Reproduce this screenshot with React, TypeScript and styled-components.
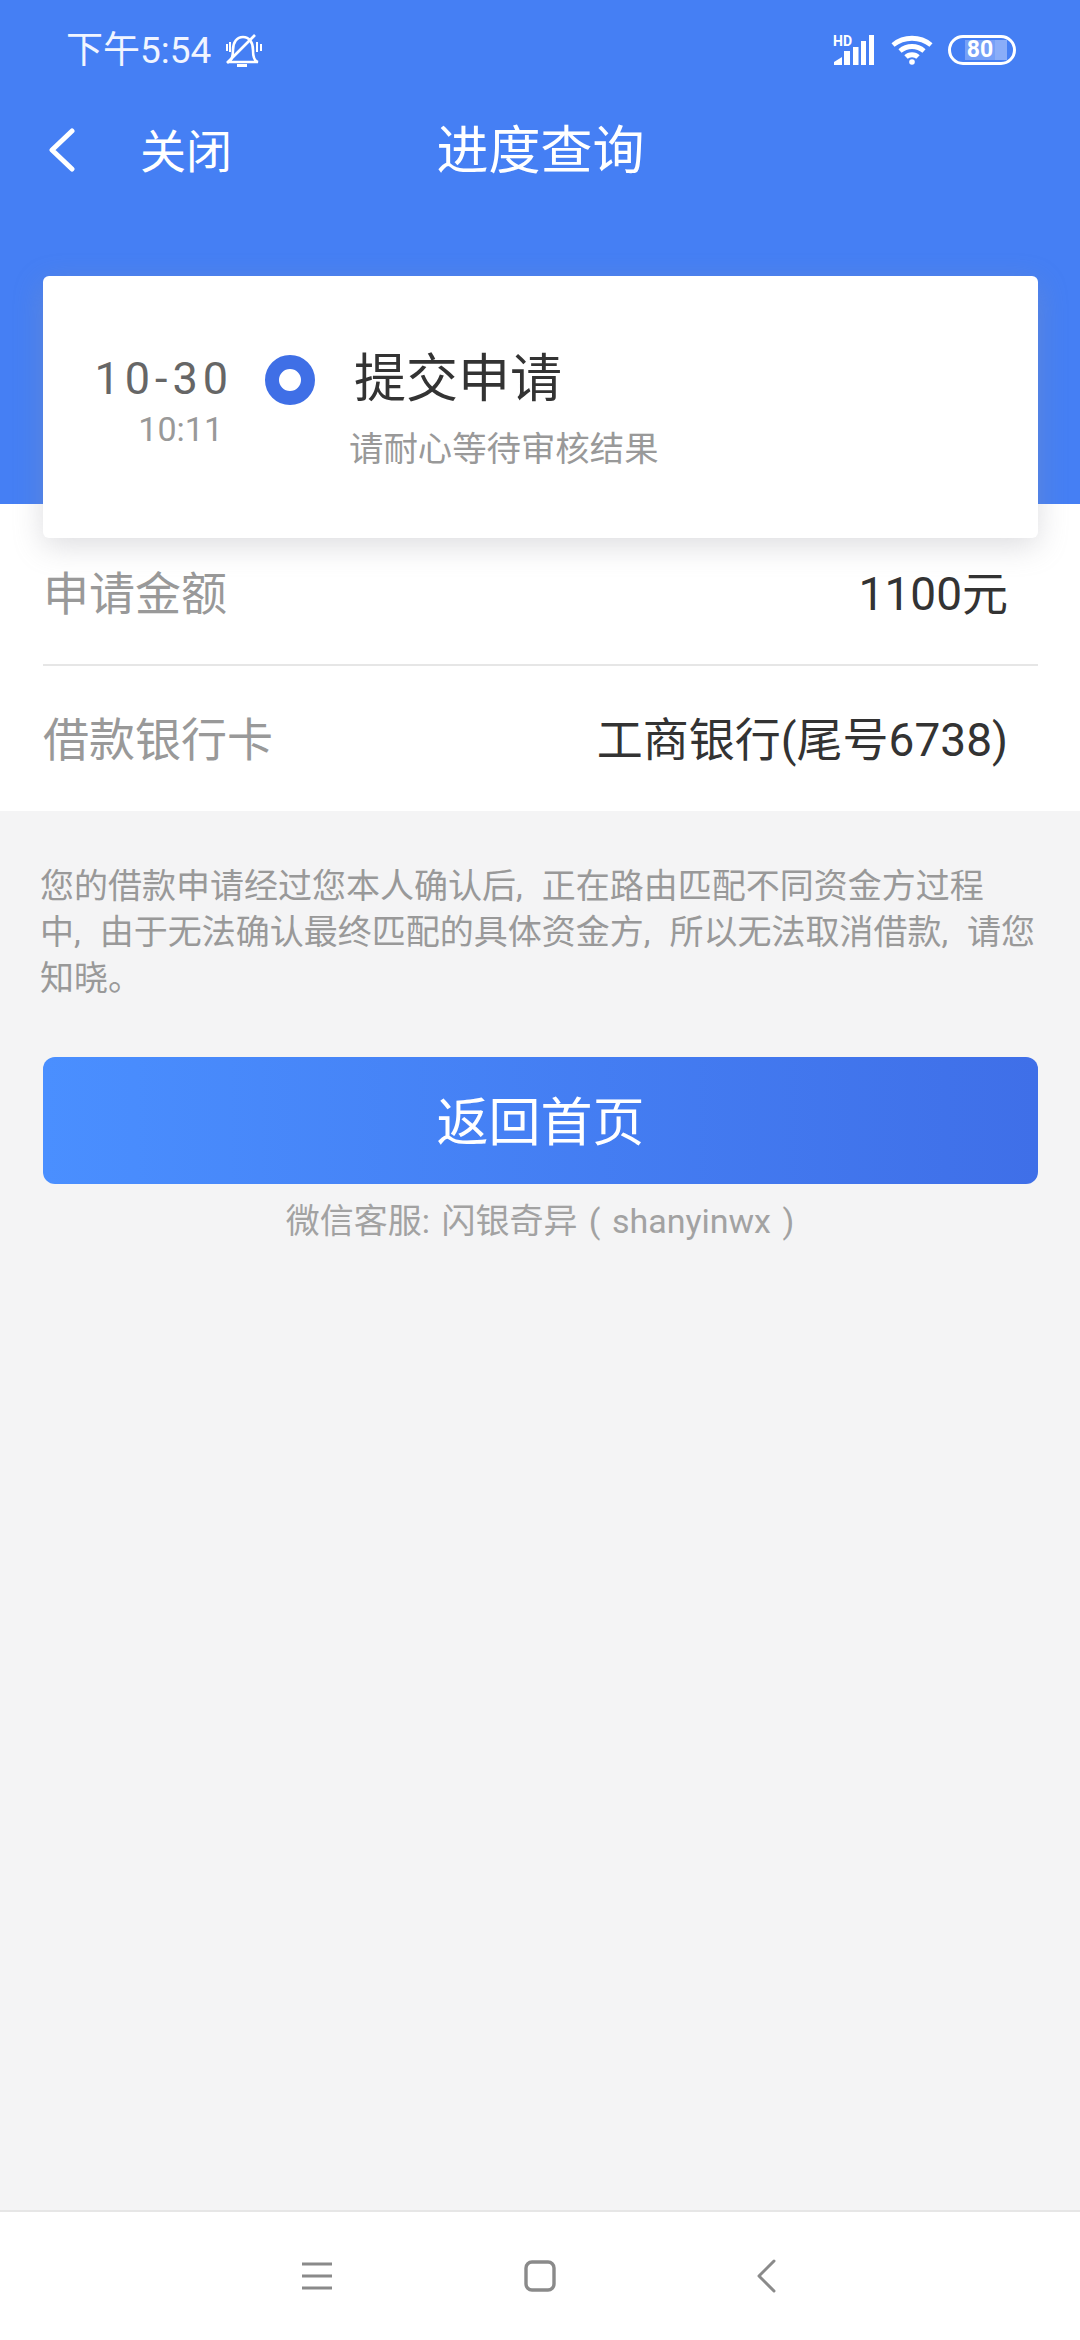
import styled, { createGlobalStyle } from "styled-components";

const GlobalStyle = createGlobalStyle`
  html, body {
    margin: 0;
    padding: 0;
    background: #f4f4f5;
    font-family: Roboto, "Noto Sans CJK SC", sans-serif;
  }
  * { box-sizing: border-box; }
`;

const Page = styled.div`
  width: 1080px;
  height: 2340px;
  display: flex;
  flex-direction: column;
  background: #f4f4f5;
  overflow: hidden;
`;

const Header = styled.header`
  height: 504px;
  background: #457ff4;
  padding: 0 42px 0 43px;
  color: #fff;
`;

const StatusBar = styled.div`
  height: 100px;
  display: flex;
  align-items: center;
  padding: 0 0 0 23px;
`;

const Clock = styled.span`
  font-size: 37px;
  line-height: 100px;
  margin-top: 2px;
  color: #f1f5ff;
`;

const StatusIcons = styled.div`
  margin-left: auto;
  padding-right: 22px;
  display: flex;
  align-items: center;
  gap: 15px;
`;

const BellIcon = styled.svg`
  margin: 2px 0 0 15px;
`;

const SignalIcon = styled.svg`
  margin-top: -4px;
`;

const Battery = styled.div`
  width: 68px;
  height: 30px;
  border: 3px solid #fff;
  border-radius: 15px;
  padding: 2px 6px 2px 14px;
  display: flex;
`;

const BatteryLevel = styled.div`
  width: 42px;
  padding-right: 12px;
  background: linear-gradient(90deg, #76a0f7 72%, #8aadf8 72%);
  color: #fff;
  font-size: 23px;
  font-weight: 700;
  line-height: 20px;
  text-align: center;
`;

const NavBar = styled.nav`
  height: 100px;
  position: relative;
  display: flex;
  align-items: center;
  justify-content: center;
  padding-bottom: 7px;
`;

const CloseLink = styled.div`
  position: absolute;
  left: 4px;
  top: 0;
  height: 100px;
  display: flex;
  align-items: center;
  gap: 63px;
  font-size: 46px;
`;

const CloseLabel = styled.span`
  margin-bottom: 4px;
`;

const NavTitle = styled.h1`
  margin: 0;
  font-size: 52px;
  font-weight: 400;
`;

const Card = styled.section`
  position: relative;
  margin-top: 76px;
  height: 262px;
  background: #fff;
  border-radius: 6px;
  box-shadow: 0 8px 30px rgba(150, 150, 160, 0.32);
  display: flex;
  padding: 73px 0 0 53px;
`;

const DateColumn = styled.div`
  width: 137px;
  display: flex;
  flex-direction: column;
  align-items: flex-end;
`;

const DateText = styled.div`
  font-size: 45px;
  line-height: 60px;
  letter-spacing: 5px;
  white-space: nowrap;
  color: #666;
`;

const TimeText = styled.div`
  font-size: 34px;
  line-height: 40px;
  margin-right: 10px;
  color: #999;
`;

const StepDot = styled.div`
  width: 50px;
  height: 50px;
  margin: 6px 0 0 32px;
  border: 14px solid #3f6fe6;
  border-radius: 50%;
  background: #fff;
`;

const StepColumn = styled.div`
  margin: 3px 0 0 39px;
`;

const StepTitle = styled.div`
  font-size: 52px;
  line-height: 56px;
  color: #333;
`;

const StepHint = styled.div`
  margin: 19px 0 0 -5px;
  font-size: 34.4px;
  line-height: 44px;
  color: #999;
`;

const InfoPanel = styled.section`
  margin-top: 0;
  padding: 18px 42px 0 43px;
  background: #fff;
`;

const InfoRow = styled.div<{ $divided?: boolean }>`
  height: ${({ $divided }) => ($divided ? 144 : 145)}px;
  display: flex;
  align-items: center;
  justify-content: space-between;
  padding: 0 30px 6px 0;
  font-size: 46px;
  border-bottom: ${({ $divided }) => ($divided ? "2px solid #e6e6e6" : "none")};
`;

const InfoLabel = styled.span`
  color: #999;
`;

const InfoValue = styled.span`
  color: #333;
`;

const Notice = styled.p`
  margin: 52px 0 0;
  padding: 0 20px 0 40px;
  font-size: 34px;
  line-height: 46px;
  color: #999;
`;

const Comma = styled.span`
  margin-right: 19px;
`;

const HomeButton = styled.button`
  display: block;
  margin: 56px 42px 0 43px;
  height: 127px;
  padding: 0 0 5px;
  border: none;
  border-radius: 12px;
  background: linear-gradient(90deg, #4a8fff, #3f6fe8);
  color: #fff;
  font-family: inherit;
  font-size: 52px;
`;

const Service = styled.div`
  margin-top: 15px;
  text-align: center;
  font-size: 34px;
  line-height: 44px;
  word-spacing: 3px;
  color: #a2a2a2;
`;

const BottomBar = styled.footer`
  margin-top: auto;
  height: 130px;
  background: #fff;
  border-top: 2px solid #e6e6e6;
  display: flex;
  align-items: center;
  gap: 192px;
  padding-left: 302px;
`;

const BackKey = styled.svg`
  margin-left: 8px;
`;

const App = () => (
  <Page>
    <GlobalStyle />
    <Header>
      <StatusBar>
        <Clock>下午5:54</Clock>
        <BellIcon width="36" height="34" viewBox="0 0 36 34" fill="none" stroke="#fff" strokeWidth="2.6">
          <path d="M2 28c4-1 5-5 5-12C7 8 11 3 17 3s10 5 10 13c0 7 1 11 5 12z" />
          <path d="M11 31.500h10" strokeWidth="3" />
          <path d="M1 29 29 1" />
          <path d="M1 10v7M4 8v10M31 8v10M35 10v7" strokeWidth="2" />
        </BellIcon>
        <StatusIcons>
          <SignalIcon width="43" height="34" viewBox="0 -4 43 34" fill="#fff">
            <text x="0" y="10.500" fontSize="14" fontWeight="700" fontFamily="Roboto, sans-serif">HD</text>
            <path d="M1 30v-3l8-5v8zM11 30V16h6v14zM20 30V12h5.500v18zM28 30V6h5v24zM36 30V0h5v30z" />
          </SignalIcon>
          <svg width="42" height="30" viewBox="0 0 42 30" fill="none" stroke="#fff" strokeWidth="4.8">
            <path d="M2 10c11-9 27-9 38 0M9 16c7-6 17-6 24 0M15 22c3-3 9-3 12 0" />
            <circle cx="21" cy="27" r="2.800" fill="#fff" stroke="none" />
          </svg>
          <Battery>
            <BatteryLevel>80</BatteryLevel>
          </Battery>
        </StatusIcons>
      </StatusBar>
      <NavBar>
        <CloseLink>
          <svg width="30" height="44" viewBox="0 0 30 44" fill="none" stroke="#fff" strokeWidth="5" strokeLinecap="round" strokeLinejoin="round">
            <path d="M25 3 5 22l20 19" />
          </svg>
          <CloseLabel>关闭</CloseLabel>
        </CloseLink>
        <NavTitle>进度查询</NavTitle>
      </NavBar>
      <Card>
        <DateColumn>
          <DateText>10-30</DateText>
          <TimeText>10:11</TimeText>
        </DateColumn>
        <StepDot />
        <StepColumn>
          <StepTitle>提交申请</StepTitle>
          <StepHint>请耐心等待审核结果</StepHint>
        </StepColumn>
      </Card>
    </Header>
    <InfoPanel>
      <InfoRow $divided>
        <InfoLabel>申请金额</InfoLabel>
        <InfoValue>1100元</InfoValue>
      </InfoRow>
      <InfoRow>
        <InfoLabel>借款银行卡</InfoLabel>
        <InfoValue>工商银行(尾号6738)</InfoValue>
      </InfoRow>
    </InfoPanel>
    <Notice>
      您的借款申请经过您本人确认后<Comma>,</Comma>正在路由匹配不同资金方过程
      <br />
      中<Comma>,</Comma>由于无法确认最终匹配的具体资金方<Comma>,</Comma>所以无法取消借款<Comma>,</Comma>请您
      <br />
      知晓。
    </Notice>
    <HomeButton>返回首页</HomeButton>
    <Service>微信客服: 闪银奇异 ( shanyinwx )</Service>
    <BottomBar>
      <svg width="30" height="32" viewBox="0 0 30 32" stroke="#8a8a8a" strokeWidth="3">
        <path d="M0 4h30M0 16h30M0 28h30" />
      </svg>
      <svg width="32" height="32" viewBox="0 0 32 32" fill="none" stroke="#8a8a8a" strokeWidth="3.400">
        <rect x="2" y="2" width="28" height="28" rx="6" />
      </svg>
      <BackKey width="20" height="34" viewBox="0 0 20 34" fill="none" stroke="#8a8a8a" strokeWidth="3" strokeLinecap="round" strokeLinejoin="round">
        <path d="M18 2 3 17l15 15" />
      </BackKey>
    </BottomBar>
  </Page>
);

export default App;
